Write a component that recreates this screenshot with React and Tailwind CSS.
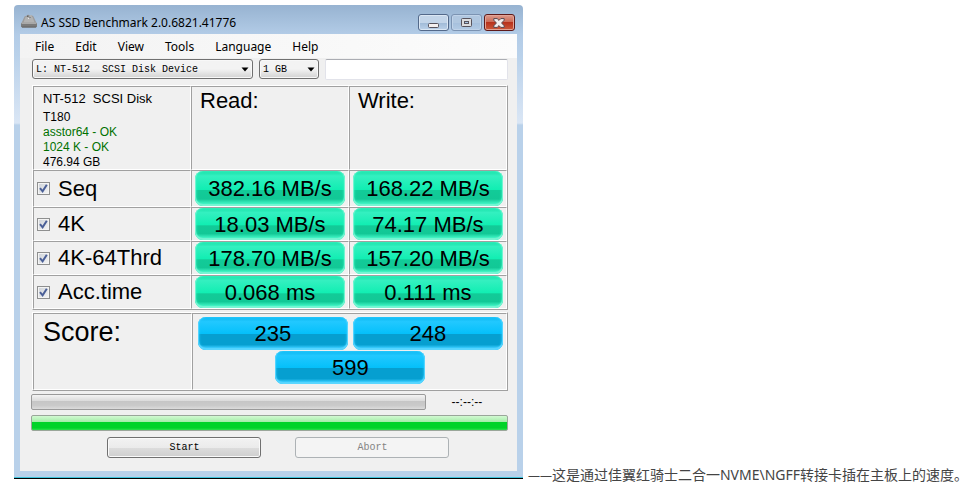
import React from 'react';
import { useState } from 'react';

const menuItems = ['File', 'Edit', 'View', 'Tools', 'Language', 'Help'];

const tests = [
  { id: 'seq', label: 'Seq', read: '382.16 MB/s', write: '168.22 MB/s', height: 'h-[35px]' },
  { id: '4k', label: '4K', read: '18.03 MB/s', write: '74.17 MB/s', height: 'h-8' },
  { id: '4k64', label: '4K-64Thrd', read: '178.70 MB/s', write: '157.20 MB/s', height: 'h-8' },
  { id: 'acc', label: 'Acc.time', read: '0.068 ms', write: '0.111 ms', height: 'h-8' },
];

// Etched cell: gray on the top and left, white on the bottom and right
const cell = 'border border-t-[#a0a0a0] border-l-[#a0a0a0] border-r-white border-b-white p-0';
const frame = 'w-full table-fixed border-separate border-spacing-0 border border-t-white border-l-white border-r-[#a0a0a0] border-b-[#a0a0a0]';

const GreenPill = ({ children, height }) => (
  <div
    className={`${height} flex items-center justify-center whitespace-nowrap rounded-lg bg-[linear-gradient(#18dca6_0%,#34f0c0_14%,#10eeb2_54%,#12cb98_55%,#12c896_80%,#3cf0c0_92%)] pt-px text-[22px] leading-6 shadow-[inset_0_-1px_1px_1px_#7af5d4,inset_0_0_3px_1px_#2cf2bc]`}
  >
    {children}
  </div>
);

const BluePill = ({ children }) => (
  <div className="flex h-[33px] w-[150px] items-center justify-center rounded-lg bg-[linear-gradient(#0ab4ee_0%,#22c8ff_14%,#04c0fa_51%,#069fd0_52%,#069fd0_84%,#3accff_94%)] pt-px text-[22px] leading-6 shadow-[inset_0_-1px_1px_1px_#5ad6ff,inset_0_0_3px_1px_#22c8ff]">
    {children}
  </div>
);

const DriveIcon = () => (
  <svg width="16" height="14" viewBox="0 0 16 14" aria-hidden="true">
    <path d="M3.500 2.500 6 1.500l1-1 1.500 1L10.500 1l2 1.500L15.500 9H.5z" fill="#9c9c9c" />
    <path d="M4.500 3 8 2.500l3.500 .5 2 5.500h-11z" fill="#b2b2b2" />
    <path d="M0 9h16v3.500l-1 1H1l-1-1z" fill="#7b7b7b" />
    <path d="M.5 8.500h15v1.500H.5z" fill="#a8a8a8" />
    <path d="M1 12.500h14v1H1z" fill="#666" />
    <path d="M6 1.500h1.500v1.500H6zM8.500 3h1v1h-1z" fill="#646464" />
    <path d="M7 4h1v1H7zM9.500 1.500h1v1h-1z" fill="#e4e4e4" />
  </svg>
);

const Combo = ({ label, options, className }) => (
  <div className={`relative ${className}`}>
    <select
      aria-label={label}
      className="block h-5 w-full appearance-none rounded-[3px] border border-[#707070] bg-linear-to-b from-[#f3f3f3] from-50% to-[#d2d2d2] pl-[3px] font-['Liberation_Mono',monospace] text-[10px] text-black shadow-[inset_0_0_0_1px_#f8f8f8]"
    >
      {options.map((option) => (
        <option key={option}>{option}</option>
      ))}
    </select>
    <svg className="pointer-events-none absolute top-2 right-1" width="8" height="5" viewBox="0 0 8 5" aria-hidden="true">
      <path d="M.5 .5h7L4 4.5z" fill="#000" />
    </svg>
  </div>
);

const Check = ({ id, checked, onChange }) => (
  <span className="relative flex h-[13px] w-[13px] shrink-0">
    <input
      id={id}
      type="checkbox"
      checked={checked}
      onChange={onChange}
      className="peer h-[13px] w-[13px] appearance-none border border-[#8e8f8f] bg-linear-to-br from-[#cdd2d8] to-[#f6f6f6] shadow-[inset_0_0_0_1px_#f4f4f4]"
    />
    <svg className="pointer-events-none absolute inset-0 hidden peer-checked:block" width="13" height="13" viewBox="0 0 13 13" aria-hidden="true">
      <path d="M3 6.2 5.6 9.3 9.8 2.8" fill="none" stroke="#4a5f97" strokeWidth="2" />
    </svg>
  </span>
);

const TitleBar = () => (
  <header className="flex h-[29px] items-center pr-[2px] pl-px">
    <div className="pt-[2px]">
      <DriveIcon />
    </div>
    <h1 className="min-w-0 flex-1 truncate pt-1.5 pl-1 font-['Noto_Sans',sans-serif] text-[12px] leading-5">AS SSD Benchmark 2.0.6821.41776</h1>
    <div className="flex gap-[2px] pt-1.5">
      <button
        aria-label="Minimize"
        className="flex h-[17px] w-[31px] items-center justify-center rounded-[3px] border border-[#53698a] bg-[linear-gradient(#c3d5e9_50%,#9fb9d6_51%,#bcd2ea)] shadow-[inset_0_0_0_1px_#dbe7f4]"
      >
        <svg width="11" height="13" viewBox="0 0 11 13" aria-hidden="true">
          <rect x=".5" y="7.5" width="10" height="4" rx="1" fill="#f4f0f0" stroke="#57535c" />
        </svg>
      </button>
      <button
        aria-label="Maximize"
        className="flex h-[17px] w-[31px] items-center justify-center rounded-[3px] border border-[#7b93b2] bg-[linear-gradient(#b0c7e0_50%,#a5bfdc_51%,#b3cbe5)] shadow-[inset_0_0_0_1px_#c0d3e9]"
      >
        <svg width="11" height="9" viewBox="0 0 11 9" aria-hidden="true">
          <rect x=".5" y=".5" width="10" height="8" rx="1" fill="#dcdcde" stroke="#57535c" />
          <rect x="3.5" y="3.5" width="4" height="2" fill="#a8c4e2" stroke="#57535c" />
        </svg>
      </button>
      <button
        aria-label="Close"
        className="flex h-[17px] w-[31px] items-center justify-center rounded-[3px] border border-[#5e1a1a] bg-[linear-gradient(#dc9a8c,#cc6c58_45%,#b8321c_50%,#cc5a3c)] shadow-[inset_0_0_0_1px_#e2a497]"
      >
        <svg width="12" height="10" viewBox="0 0 12 10" aria-hidden="true">
          <path d="M.8 .6h3.400L6 2.400 7.800 .6h3.400v1.600L8.600 5l2.600 2.800v1.600H7.800L6 7.600 4.200 9.400H.8V7.800L3.400 5 .8 2.200z" fill="#f2eeee" stroke="#57464e" strokeWidth="1" />
        </svg>
      </button>
    </div>
  </header>
);

const App = () => {
  const [enabled, setEnabled] = useState({ seq: true, '4k': true, '4k64': true, acc: true });

  const toggle = (id) => setEnabled({ ...enabled, [id]: !enabled[id] });

  return (
    <div className="flex items-end bg-white pt-[5px] pl-[14px] font-['Liberation_Sans',sans-serif] text-black">
      <main className="mb-[7px] w-full max-w-[509px] min-w-0 rounded-t border-b border-black">
        <div className="rounded-t border-b border-[#3fc4dc] bg-[linear-gradient(#97b3d1_0px,#b3cce7_30px,#b9d1ea_50px,#dae6f5_118px,#b9d1ea_120px)] px-[6px] pb-[6px]">
          <TitleBar />

          <div className="bg-[#f0f0f0] pb-[13px]">
            <nav className="flex h-6 items-center gap-[21px] bg-linear-to-r from-[#f3f3f3] to-[#fcfcfc] pt-[2px] pl-[15px] font-['Noto_Sans',sans-serif] text-[12px] leading-5">
              {menuItems.map((item) => (
                <button key={item}>{item}</button>
              ))}
            </nav>

            <div className="flex items-start gap-[6px] pt-px pr-[9px] pl-3">
              <Combo label="Drive" options={['L: NT-512\u00a0 SCSI Disk Device']} className="w-[221px]" />
              <Combo label="Test size" options={['1 GB']} className="w-[60px]" />
              <input aria-label="Result name" className="h-[21px] min-w-0 flex-1 rounded-[2px] border border-[#e2e3ea] border-t-[#abadb3] bg-white px-1 text-xs" />
            </div>

            <div className="pt-[5px] pr-[9px] pl-3">
              <table className={frame}>
                <colgroup>
                  <col className="w-[158px]" />
                  <col />
                  <col />
                </colgroup>
                <thead>
                  <tr className="text-left align-top font-normal">
                    <td className={cell}>
                      <div className="h-[82px] pt-[3px] pl-[9px] text-[12px] leading-[15px] whitespace-nowrap">
                        <p className="pb-[3px] text-[13px] leading-[17px]">NT-512&nbsp; SCSI Disk</p>
                        <p>T180</p>
                        <p className="text-[#007000]">asstor64 - OK</p>
                        <p className="text-[#007000]">1024 K - OK</p>
                        <p>476.94 GB</p>
                      </div>
                    </td>
                    <th className={`${cell} pl-2 text-[22px] leading-[27px] font-normal`}>Read:</th>
                    <th className={`${cell} pl-2 text-[22px] leading-[27px] font-normal`}>Write:</th>
                  </tr>
                </thead>
                <tbody>
                  {tests.map((test) => (
                    <tr key={test.id}>
                      <th className={`${cell} font-normal`}>
                        <div className="flex items-center gap-2 pl-[3px] text-[22px] leading-6">
                          <Check id={test.id} checked={enabled[test.id]} onChange={() => toggle(test.id)} />
                          <label htmlFor={test.id}>{test.label}</label>
                        </div>
                      </th>
                      <td className={`${cell} px-[3px]`}>
                        <GreenPill height={test.height}>{test.read}</GreenPill>
                      </td>
                      <td className={`${cell} px-[3px]`}>
                        <GreenPill height={test.height}>{test.write}</GreenPill>
                      </td>
                    </tr>
                  ))}
                </tbody>
              </table>

              <table className={`${frame} mt-[2px]`}>
                <colgroup>
                  <col className="w-[159px]" />
                  <col />
                </colgroup>
                <tbody>
                  <tr className="align-top">
                    <th className={`${cell} pl-[9px] text-left text-[27px] leading-9 font-normal`}>Score:</th>
                    <td className={cell}>
                      <div className="flex h-[75px] flex-wrap content-start justify-center gap-x-[5px] gap-y-px pt-[3px] pl-[2px]">
                        <BluePill>235</BluePill>
                        <BluePill>248</BluePill>
                        <BluePill>599</BluePill>
                      </div>
                    </td>
                  </tr>
                </tbody>
              </table>
            </div>

            <div className="flex flex-col gap-[5px] pt-[3px] pr-[9px] pl-[11px]">
              <div className="flex items-center">
                <div
                  role="progressbar"
                  aria-label="Current test"
                  className="h-4 min-w-0 flex-1 rounded-[2px] border border-[#9a9a9a] bg-[linear-gradient(#f4f4f4,#dcdcdc_40%,#c6c6c6_45%,#cacaca_75%,#dcdcdc)]"
                />
                <span className="w-[82px] text-center text-[12px] leading-4">--:--:--</span>
              </div>
              <div
                role="progressbar"
                aria-label="Total"
                className="h-4 rounded-[2px] border border-[#9aa69a] bg-[linear-gradient(#d2fad2,#a4eca8_42%,#00d328_43%,#00d328_85%,#2ee04c)]"
              />
            </div>

            <div className="flex justify-center gap-[34px] pt-[6px] pl-5 font-['Liberation_Mono',monospace] text-[10px]">
              <button className="h-[21px] w-[154px] rounded-[3px] border border-[#707070] bg-[linear-gradient(#f2f2f2,#ebebeb_50%,#dddddd_51%,#cfcfcf)] shadow-[inset_0_0_0_1px_#fafafa]">
                Start
              </button>
              <button disabled className="h-[21px] w-[154px] rounded-[3px] border border-[#adb2b5] bg-[#f4f4f4] text-[#838383]">
                Abort
              </button>
            </div>
          </div>
        </div>
      </main>

      <p className="shrink-0 pl-[5px] font-['Noto_Sans','Noto_Sans_CJK_SC',sans-serif] text-[14px] leading-5 whitespace-nowrap text-[#444]">
        <span className="text-[12px]">——</span>这是通过佳翼红骑士二合一NVME\NGFF转接卡插在主板上的速度。
      </p>
    </div>
  );
};

export default App;
